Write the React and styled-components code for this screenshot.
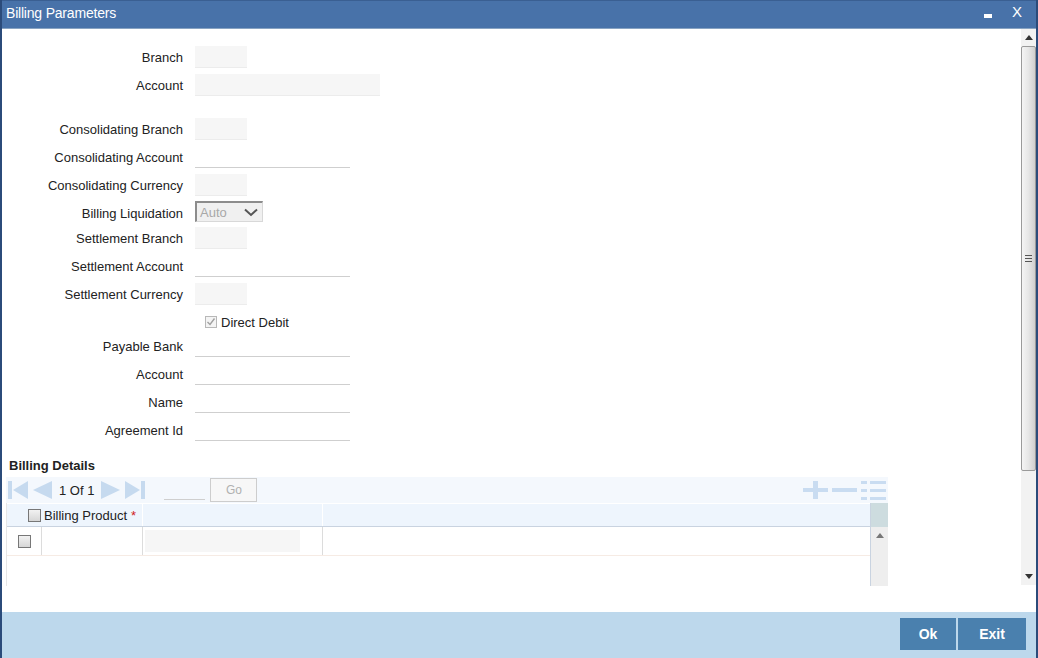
import React from "react";
import styled, { createGlobalStyle } from "styled-components";

const GlobalStyle = createGlobalStyle`
  html, body {
    margin: 0;
    padding: 0;
    overflow: hidden;
    background: #ffffff;
  }
  * {
    box-sizing: border-box;
  }
`;

const fields = [
  { label: "Branch", kind: "box", w: 52 },
  { label: "Account", kind: "box", w: 185 },
  { spacer: 16 },
  { label: "Consolidating Branch", kind: "box", w: 52 },
  { label: "Consolidating Account", kind: "line" },
  { label: "Consolidating Currency", kind: "box", w: 52 },
  { label: "Billing Liquidation", kind: "select", h: 25 },
  { label: "Settlement Branch", kind: "box", w: 52 },
  { label: "Settlement Account", kind: "line" },
  { label: "Settlement Currency", kind: "box", w: 52 },
  { label: "", kind: "check", h: 24 },
  { label: "Payable Bank", kind: "line" },
  { label: "Account", kind: "line" },
  { label: "Name", kind: "line" },
  { label: "Agreement Id", kind: "line" },
];

function App() {
  return (
    <>
      <GlobalStyle />
      <Window>
        <TitleBar>
          <Title>Billing Parameters</Title>
          <WinButtons>
            <Minimize />
            <CloseX>X</CloseX>
          </WinButtons>
        </TitleBar>
        <Body>
          <Main>
            <Form>
              {fields.map((f, i) =>
                f.spacer ? (
                  <Spacer key={i} $h={f.spacer} />
                ) : (
                  <Row key={i} $h={f.h}>
                    <Label $drop={f.kind === "select"}>{f.label}</Label>
                    {f.kind === "box" && <BoxInput $w={f.w} />}
                    {f.kind === "line" && <LineInput />}
                    {f.kind === "select" && (
                      <Select>
                        <span>Auto</span>
                        <svg width="14" height="9" viewBox="0 0 14 9">
                          <path d="M1 1.5 L7 7 L13 1.5" fill="none" stroke="#555" strokeWidth="2" />
                        </svg>
                      </Select>
                    )}
                    {f.kind === "check" && (
                      <CheckWrap>
                        <DisabledCheck>
                          <svg width="10" height="10" viewBox="0 0 10 10">
                            <path d="M1.5 5 L4 7.5 L8.5 1.5" fill="none" stroke="#a0a0a0" strokeWidth="1.4" />
                          </svg>
                        </DisabledCheck>
                        <CheckText>Direct Debit</CheckText>
                      </CheckWrap>
                    )}
                  </Row>
                )
              )}
            </Form>

            <SectionTitle>Billing Details</SectionTitle>
            <Grid>
              <Toolbar>
                <Pager>
                  <NavIcon viewBox="0 0 20 20">
                    <rect x="0" y="1" width="4" height="18" />
                    <path d="M20 1 L20 19 L5 10 Z" />
                  </NavIcon>
                  <NavIcon viewBox="0 0 20 20">
                    <path d="M20 1 L20 19 L1 10 Z" />
                  </NavIcon>
                  <PageText>1 Of 1</PageText>
                  <NavIcon viewBox="0 0 20 20">
                    <path d="M0 1 L0 19 L19 10 Z" />
                  </NavIcon>
                  <NavIcon viewBox="0 0 20 20">
                    <path d="M0 1 L0 19 L15 10 Z" />
                    <rect x="16" y="1" width="4" height="18" />
                  </NavIcon>
                  <PageInput />
                  <GoButton>Go</GoButton>
                </Pager>
                <Tools>
                  <ToolIcon viewBox="0 0 25 20">
                    <rect x="10" y="1" width="5" height="18" />
                    <rect x="0" y="8" width="25" height="4" />
                  </ToolIcon>
                  <ToolIcon viewBox="0 0 25 20">
                    <rect x="0" y="8" width="25" height="4" />
                  </ToolIcon>
                  <ToolIcon viewBox="0 0 25 20">
                    <rect x="0" y="1" width="6" height="3" />
                    <rect x="9" y="1" width="16" height="3" />
                    <rect x="0" y="9" width="6" height="3" />
                    <rect x="9" y="9" width="16" height="3" />
                    <rect x="0" y="17" width="6" height="3" />
                    <rect x="9" y="17" width="16" height="3" />
                  </ToolIcon>
                </Tools>
              </Toolbar>
              <TableWrap>
                <Table>
                  <HeadRow>
                    <HeadCell $w={136}>
                      <HeadCheck />
                      <span>Billing Product</span>
                      <Req>*</Req>
                    </HeadCell>
                    <HeadCell $w={180} />
                    <HeadCell $grow />
                  </HeadRow>
                  <BodyRow>
                    <Cell $w={35} $center>
                      <RowCheck />
                    </Cell>
                    <Cell $w={101} />
                    <Cell $w={180}>
                      <CellInput />
                    </Cell>
                    <Cell $grow />
                  </BodyRow>
                </Table>
                <GridScroll>
                  <GridScrollHead />
                  <GridScrollTrack>
                    <svg width="8" height="5" viewBox="0 0 8 5">
                      <path d="M0 5 L4 0 L8 5 Z" fill="#777" />
                    </svg>
                  </GridScrollTrack>
                </GridScroll>
              </TableWrap>
            </Grid>
          </Main>
          <ScrollBar>
            <Arrow>
              <svg width="8" height="5" viewBox="0 0 8 5">
                <path d="M0 5 L4 0 L8 5 Z" fill="#333" />
              </svg>
            </Arrow>
            <Thumb>
              <Grip />
            </Thumb>
            <Track />
            <Arrow>
              <svg width="8" height="5" viewBox="0 0 8 5">
                <path d="M0 0 L4 5 L8 0 Z" fill="#333" />
              </svg>
            </Arrow>
          </ScrollBar>
        </Body>
        <Footer>
          <FootButton $w={56}>Ok</FootButton>
          <FootButton $w={68}>Exit</FootButton>
        </Footer>
      </Window>
    </>
  );
}

export default App;

const Window = styled.div`
  width: 1038px;
  height: 658px;
  display: flex;
  flex-direction: column;
  border-left: 2px solid #2b4b7a;
  border-right: 2px solid #2b4b7a;
  font-family: "Liberation Sans", Arial, sans-serif;
  font-size: 13px;
  color: #222;
`;

const TitleBar = styled.div`
  height: 29px;
  flex-shrink: 0;
  background: #4872a9;
  border-top: 1px solid #3a5f92;
  border-bottom: 1px solid #88a3c2;
  display: flex;
  align-items: center;
  justify-content: space-between;
  padding: 0 14px 0 4px;
`;

const Title = styled.div`
  color: #ffffff;
  font-size: 14px;
  letter-spacing: -0.2px;
  margin-top: -4px;
`;

const WinButtons = styled.div`
  display: flex;
  align-items: center;
  gap: 20px;
  margin-top: -6px;
`;

const Minimize = styled.div`
  width: 8px;
  height: 4px;
  background: #ffffff;
  margin-top: 8px;
`;

const CloseX = styled.div`
  color: #ffffff;
  font-size: 15px;
`;

const Body = styled.div`
  flex: 1;
  display: flex;
  align-items: flex-start;
  background: #ffffff;
`;

const Main = styled.div`
  flex: 1;
  display: flex;
  flex-direction: column;
`;

const Form = styled.div`
  display: flex;
  flex-direction: column;
  padding-top: 14px;
`;

const Spacer = styled.div`
  height: ${(p) => p.$h}px;
`;

const Row = styled.div`
  height: ${(p) => p.$h || 28}px;
  display: flex;
  align-items: center;
  gap: 12px;
`;

const Label = styled.div`
  width: 181px;
  text-align: right;
  flex-shrink: 0;
  margin-top: ${(p) => (p.$drop ? "3px" : "0")};
`;

const BoxInput = styled.div`
  width: ${(p) => p.$w}px;
  height: 22px;
  background: #f6f6f6;
  border-bottom: 1px solid #ececec;
`;

const LineInput = styled.div`
  width: 155px;
  height: 22px;
  border-bottom: 1px solid #cfcfcf;
`;

const Select = styled.div`
  width: 68px;
  height: 21px;
  background: #f0f0f0;
  border-top: 2px solid #8c8c8c;
  border-left: 2px solid #8c8c8c;
  border-right: 1px solid #d8d8d8;
  border-bottom: 1px solid #d8d8d8;
  display: flex;
  align-items: center;
  justify-content: space-between;
  padding: 0 4px 0 3px;
  color: #a8a8a8;
  font-size: 13px;
`;

const CheckWrap = styled.div`
  display: flex;
  align-items: center;
  gap: 4px;
  padding-left: 10px;
  padding-top: 4px;
`;

const DisabledCheck = styled.div`
  width: 12px;
  height: 12px;
  border: 1px solid #b8b8b8;
  background: #f4f4f4;
  display: flex;
  align-items: center;
  justify-content: center;
`;

const CheckText = styled.span`
  color: #222;
`;

const SectionTitle = styled.div`
  font-weight: bold;
  font-size: 13px;
  padding: 14px 0 0 7px;
  height: 33px;
`;

const Grid = styled.div`
  margin-left: 4px;
  width: 882px;
  display: flex;
  flex-direction: column;
`;

const Toolbar = styled.div`
  height: 26px;
  background: #f4f8fd;
  display: flex;
  align-items: center;
  justify-content: space-between;
  padding: 0 2px 0 2px;
`;

const Pager = styled.div`
  display: flex;
  align-items: center;
  gap: 4px;
`;

const NavIcon = styled.svg`
  width: 20px;
  height: 20px;
  fill: #c6daef;
`;

const PageText = styled.span`
  font-size: 13px;
  padding: 0 3px;
  color: #222;
`;

const PageInput = styled.div`
  width: 41px;
  height: 20px;
  margin-left: 15px;
  border-bottom: 1px solid #cfcfcf;
`;

const GoButton = styled.div`
  width: 47px;
  height: 24px;
  margin-left: 1px;
  border: 1px solid #cdcdcd;
  background: #f7f7f7;
  color: #b0b0b0;
  font-size: 12px;
  display: flex;
  align-items: center;
  justify-content: center;
`;

const Tools = styled.div`
  display: flex;
  align-items: center;
  gap: 4px;
`;

const ToolIcon = styled.svg`
  width: 25px;
  height: 20px;
  fill: #c9dcf1;
`;

const TableWrap = styled.div`
  display: flex;
  height: 83px;
`;

const Table = styled.div`
  width: 865px;
  display: flex;
  flex-direction: column;
  border-left: 1px solid #e6e6e6;
  border-right: 1px solid #c9d3e0;
`;

const HeadRow = styled.div`
  height: 24px;
  display: flex;
  background: #eef5fd;
  border-top: 1px solid #ffffff;
  border-bottom: 1px solid #c9d3e0;
`;

const HeadCell = styled.div`
  width: ${(p) => (p.$grow ? "auto" : `${p.$w}px`)};
  flex: ${(p) => (p.$grow ? 1 : "none")};
  display: flex;
  align-items: center;
  border-right: ${(p) => (p.$grow ? "none" : "1px solid #ffffff")};
  padding-left: ${(p) => (p.$w === 136 ? "21px" : "0")};
  color: #222;
`;

const HeadCheck = styled.div`
  width: 13px;
  height: 13px;
  border: 1px solid #777;
  background: linear-gradient(#f2f2f2, #d6d6d6);
  margin-right: 3px;
`;

const Req = styled.span`
  color: #d02020;
  margin-left: 4px;
`;

const BodyRow = styled.div`
  height: 29px;
  display: flex;
  border-bottom: 1px solid #f6ebe4;
`;

const Cell = styled.div`
  width: ${(p) => (p.$grow ? "auto" : `${p.$w}px`)};
  flex: ${(p) => (p.$grow ? 1 : "none")};
  display: flex;
  align-items: center;
  justify-content: ${(p) => (p.$center ? "center" : "flex-start")};
  border-right: ${(p) => (p.$grow ? "none" : "1px solid #dcdcdc")};
  padding-left: ${(p) => (p.$center ? "0" : "2px")};
`;

const RowCheck = styled.div`
  width: 13px;
  height: 13px;
  border: 1px solid #777;
  background: linear-gradient(#f2f2f2, #d6d6d6);
`;

const CellInput = styled.div`
  width: 155px;
  height: 22px;
  background: #f6f6f6;
`;

const GridScroll = styled.div`
  width: 17px;
  display: flex;
  flex-direction: column;
`;

const GridScrollHead = styled.div`
  height: 24px;
  background: #cddcdf;
`;

const GridScrollTrack = styled.div`
  flex: 1;
  background: #eeeeee;
  display: flex;
  justify-content: center;
  padding-top: 6px;
`;

const ScrollBar = styled.div`
  width: 15px;
  height: 556px;
  display: flex;
  flex-direction: column;
  background: #f2f2f2;
`;

const Arrow = styled.div`
  height: 17px;
  display: flex;
  align-items: center;
  justify-content: center;
  background: #f2f2f2;
`;

const Thumb = styled.div`
  height: 425px;
  border: 1px solid #9a9a9a;
  border-radius: 2px;
  background: linear-gradient(to right, #f4f4f4, #e6e6e6 50%, #cfcfcf);
  display: flex;
  align-items: center;
  justify-content: center;
`;

const Grip = styled.div`
  width: 7px;
  height: 7px;
  background: repeating-linear-gradient(#555 0 1px, transparent 1px 3px);
`;

const Track = styled.div`
  flex: 1;
  background: #f2f2f2;
`;

const Footer = styled.div`
  height: 46px;
  margin-top: auto;
  flex-shrink: 0;
  background: #bdd8ec;
  display: flex;
  align-items: flex-start;
  justify-content: flex-end;
  padding: 6px 10px 0 0;
  gap: 2px;
`;

const FootButton = styled.div`
  width: ${(p) => p.$w}px;
  height: 32px;
  background: #4a80ae;
  color: #ffffff;
  font-weight: bold;
  font-size: 14px;
  display: flex;
  align-items: center;
  justify-content: center;
`;
